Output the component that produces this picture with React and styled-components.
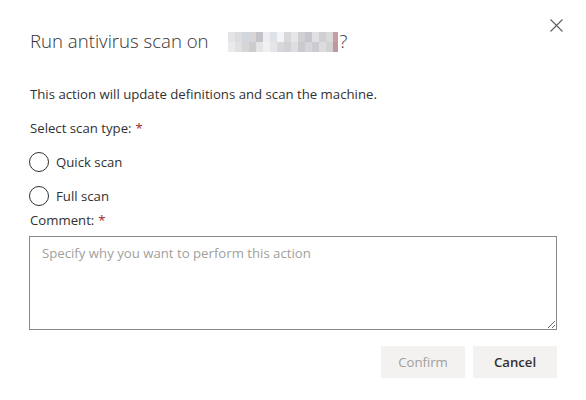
import React from 'react'
import styled, { createGlobalStyle } from 'styled-components'

const Global = createGlobalStyle`
  html, body {
    margin: 0;
    padding: 0;
    background: #fff;
  }
  body {
    font-family: "Segoe UI", "Open Sans", "Liberation Sans", sans-serif;
    color: #323130;
  }
`

const Dialog = styled.div`
  width: 586px;
  height: 400px;
  box-sizing: border-box;
  padding: 26px 29px 0 29px;
  position: relative;
  display: flex;
  flex-direction: column;
`

const Close = styled.button`
  position: absolute;
  top: 13px;
  right: 18px;
  width: 24px;
  height: 24px;
  border: 0;
  padding: 0;
  background: transparent;
  display: flex;
  align-items: center;
  justify-content: center;
  color: #605e5c;
`

const Title = styled.h1`
  margin: 0 0 0 1px;
  font-size: 18.6px;
  font-weight: 300;
  line-height: 30px;
  display: flex;
  align-items: center;
`

const Blur = styled.svg`
  margin-left: 19px;
  margin-right: 2px;
`

const Text = styled.p`
  margin: ${p => p.$top || 0}px 0 0 1px;
  font-size: 13.2px;
  line-height: 20px;
`

const Req = styled.span`
  color: #a4262c;
  margin-left: 4px;
`

const Options = styled.div`
  display: flex;
  flex-direction: column;
  gap: 14px;
  margin-top: 14px;
`

const Option = styled.label`
  display: flex;
  align-items: center;
  gap: 7px;
  font-size: 13.2px;
  line-height: 20px;
`

const Circle = styled.span`
  width: 20px;
  height: 20px;
  box-sizing: border-box;
  border: 1px solid #323130;
  border-radius: 50%;
  background: #fff;
`

const Comment = styled.textarea`
  margin-top: 6px;
  width: 528px;
  height: 94px;
  box-sizing: border-box;
  border: 1px solid #8a8886;
  border-radius: 0;
  padding: 6px 12px;
  font-family: inherit;
  font-size: 13.2px;
  line-height: 20px;
  color: #323130;
  outline: none;
  &::placeholder {
    color: #a19f9d;
  }
`

const Footer = styled.div`
  display: flex;
  justify-content: flex-end;
  gap: 8px;
  margin-top: 16px;
  width: 528px;
`

const Button = styled.button`
  width: 84px;
  height: 32px;
  border: 0;
  border-radius: 0;
  background: #f3f2f1;
  font-family: inherit;
  font-size: 13.2px;
  font-weight: ${p => (p.disabled ? 400 : 600)};
  color: ${p => (p.disabled ? '#a19f9d' : '#323130')};
  padding: 0;
`

const blocks = [
  ['#e4e4e6', '#dcdcde', '#d2d6de', '#d6d6d6', '#c4c4c8', '#eeeef0', '#dde2ea', '#f4f4f6', '#d8d8da', '#e6e6e8', '#cfcfd4', '#c6c6cc', '#e0e0e2', '#d0d0d4', '#dadadb', '#c49ea2'],
  ['#eaeaec', '#e0e0e2', '#d6d6d6', '#cccccf', '#e4e4e6', '#f0f0f2', '#e6e6e8', '#d8d8dc', '#d2d2d6', '#dedee0', '#cacace', '#d6d6da', '#cdcdd1', '#dcdcde', '#d2d2d4', '#c0989c'],
]

function Redacted() {
  return (
    <Blur width="110" height="21" viewBox="0 0 110 21">
      {blocks.map((row, r) =>
        row.map((c, i) => (
          <rect key={r + '-' + i} x={i * 7} y={r * 10 + 1} width={i === 15 ? 5 : 7} height={10} fill={c} />
        ))
      )}
    </Blur>
  )
}

export default function App() {
  return (
    <>
      <Global />
      <Dialog>
        <Close aria-label="Close">
          <svg width="13" height="13" viewBox="0 0 13 13">
            <path d="M0.5 0.5 L12.5 12.5 M12.5 0.5 L0.5 12.5" stroke="currentColor" strokeWidth="1.1" fill="none" />
          </svg>
        </Close>
        <Title>
          Run antivirus scan on
          <Redacted />?
        </Title>
        <Text $top={28}>This action will update definitions and scan the machine.</Text>
        <Text $top={14}>
          Select scan type:<Req>*</Req>
        </Text>
        <Options>
          <Option>
            <Circle />
            Quick scan
          </Option>
          <Option>
            <Circle />
            Full scan
          </Option>
        </Options>
        <Text $top={4}>
          Comment:<Req>*</Req>
        </Text>
        <Comment placeholder="Specify why you want to perform this action" />
        <Footer>
          <Button disabled>Confirm</Button>
          <Button>Cancel</Button>
        </Footer>
      </Dialog>
    </>
  )
}
